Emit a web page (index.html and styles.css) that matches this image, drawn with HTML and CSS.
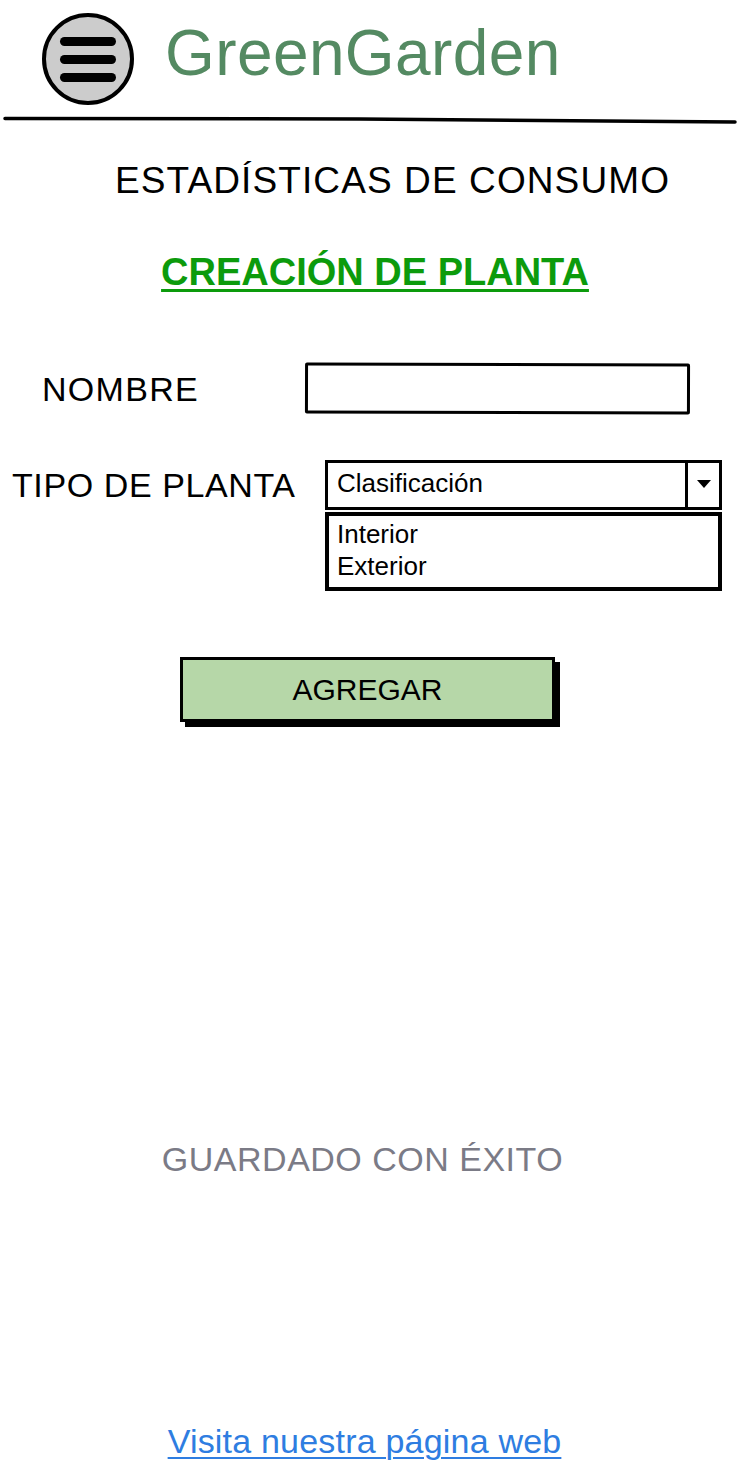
FILE: index.html
```html
<!DOCTYPE html>
<html lang="es">
<head>
<meta charset="utf-8">
<title>GreenGarden</title>
<link rel="stylesheet" href="styles.css">
</head>
<body>
<div class="page">
  <header class="header">
    <div class="menu-btn" aria-label="menú">
      <span class="bar"></span>
      <span class="bar"></span>
      <span class="bar"></span>
    </div>
    <h1 class="brand">GreenGarden</h1>
  </header>
  <svg class="rule" width="740" height="10" viewBox="0 0 740 10">
    <path d="M5 4.5 L360 5 L735 8" stroke="#000" stroke-width="3.5" fill="none" stroke-linecap="round"/>
  </svg>

  <p class="stats">ESTADÍSTICAS DE CONSUMO</p>
  <p class="section-title">CREACIÓN DE PLANTA</p>

  <div class="row row-name">
    <span class="label label-name">NOMBRE</span>
    <div class="input"></div>
  </div>

  <div class="row row-type">
    <span class="label label-type">TIPO DE PLANTA</span>
    <div class="select-col">
      <div class="select">
        <span class="select-text">Clasificación</span>
        <span class="select-btn"><span class="tri"></span></span>
      </div>
      <div class="options">
        <span class="option">Interior</span>
        <span class="option">Exterior</span>
      </div>
    </div>
  </div>

  <div class="btn-wrap">
    <div class="btn">AGREGAR</div>
  </div>

  <p class="saved">GUARDADO CON ÉXITO</p>
  <p class="link-wrap"><a class="link" href="#">Visita nuestra página web</a></p>
</div>
</body>
</html>
```

FILE: styles.css
```css
* { box-sizing: border-box; }
html, body {
  margin: 0;
  padding: 0;
  background: #fff;
}
body {
  font-family: "Liberation Sans", Arial, sans-serif;
  color: #000;
}
.page {
  width: 740px;
  height: 1470px;
  overflow: hidden;
}
.header {
  display: flex;
  align-items: flex-start;
  padding: 13px 0 0 42px;
  height: 105px;
  gap: 31px;
}
.menu-btn {
  width: 92px;
  height: 92px;
  border: 4px solid #000;
  border-radius: 50%;
  background: #cccccc;
  display: flex;
  flex-direction: column;
  align-items: center;
  justify-content: center;
  gap: 9px;
}
.bar {
  display: block;
  width: 56px;
  height: 9px;
  border-radius: 5px;
  background: #000;
}
.brand {
  margin: 8px 0 0;
  font-size: 64px;
  line-height: 1;
  font-weight: normal;
  color: #548a62;
  letter-spacing: 0.4px;
}
.rule {
  display: block;
  margin-top: 9px;
}
p { margin: 0; }
.stats {
  margin-top: 38px;
  padding-left: 115px;
  font-size: 37px;
  line-height: 1;
  letter-spacing: 1.1px;
}
.section-title {
  margin-top: 54px;
  text-align: center;
  padding-left: 10px;
  font-size: 38px;
  line-height: 1;
  font-weight: bold;
  color: #0c9b0c;
  text-decoration: underline;
  text-decoration-thickness: 3px;
  text-underline-offset: 4px;
}
.row {
  display: flex;
}
.label {
  font-size: 34px;
  line-height: 1;
}
.row-name {
  margin-top: 72px;
  padding-left: 42px;
  align-items: center;
}
.label-name {
  width: 263px;
  letter-spacing: 1.3px;
}
.input {
  width: 385px;
  height: 51px;
  border: 3px solid #000;
  border-radius: 2px;
  transform: rotate(0.15deg);
}
.row-type {
  margin-top: 46px;
  padding-left: 12px;
  align-items: flex-start;
}
.label-type {
  width: 313px;
  margin-top: 8px;
  letter-spacing: 0.6px;
}
.select-col {
  width: 397px;
  display: flex;
  flex-direction: column;
  gap: 2px;
}
.select {
  height: 50px;
  border: 3px solid #000;
  display: flex;
  align-items: center;
}
.select-text {
  flex: 1;
  padding-left: 9px;
  font-size: 26px;
  line-height: 1;
  margin-top: -5px;
}
.select-btn {
  width: 34px;
  height: 100%;
  border-left: 3px solid #000;
  display: flex;
  align-items: center;
  justify-content: center;
}
.tri {
  width: 0;
  height: 0;
  border-left: 7px solid transparent;
  border-right: 7px solid transparent;
  border-top: 8px solid #000;
  margin-top: -2px;
}
.options {
  height: 79px;
  border: 4px solid #000;
  display: flex;
  flex-direction: column;
  padding: 5px 0 0 8px;
  gap: 6px;
}
.option {
  font-size: 26px;
  line-height: 1;
}
.btn-wrap {
  margin-top: 66px;
  padding-left: 180px;
}
.btn {
  width: 375px;
  height: 65px;
  border: 3px solid #000;
  background: #b6d7a8;
  box-shadow: 5px 5px 0 #000;
  display: flex;
  align-items: center;
  justify-content: center;
  font-size: 30px;
  line-height: 1;
}
.saved {
  margin-top: 420px;
  text-align: center;
  padding-right: 15px;
  font-size: 34px;
  line-height: 1;
  color: #7b7b86;
  letter-spacing: 0.5px;
}
.link-wrap {
  margin-top: 248px;
  text-align: center;
  padding-right: 11px;
  font-size: 34px;
  line-height: 1;
  letter-spacing: 0.2px;
}
.link {
  color: #2e7de1;
  text-decoration: underline;
  text-decoration-thickness: 2px;
  text-underline-offset: 4px;
}
```
